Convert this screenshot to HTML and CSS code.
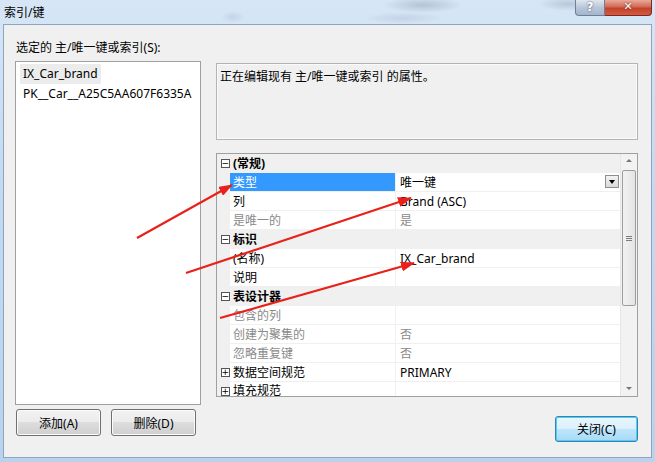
FILE: index.html
```html
<!DOCTYPE html>
<html lang="zh-CN">
<head>
<meta charset="UTF-8" />
<title>索引/键</title>
<link rel="stylesheet" href="styles.css">
</head>
<body>
	<!-- 对话框：外框 + 标题栏 + 客户区 -->
	<div class="window">
		<div class="titlebar">
			<span class="title">索引/键</span>
			<div class="caption-btns">
				<span class="cap-help">?</span>
				<span class="cap-close">&#x2715;</span>
			</div>
		</div>
		<div class="client">
			<div class="main">
				<div class="left">
					<div class="label">选定的 主/唯一键或索引(S):</div>
					<div class="listbox">
						<div class="item item-sel">IX_Car_brand</div>
						<div class="item">PK__Car__A25C5AA607F6335A</div>
					</div>
				</div>
				<div class="right">
					<div class="desc">正在编辑现有 主/唯一键或索引 的属性。</div>
					<div class="grid">
						<div class="rows">
							<div class="row cat"><span class="m"><i class="box">&minus;</i></span><span class="k">(常规)</span><span class="v"></span></div>
							<div class="row"><span class="m"></span><span class="k k-sel">类型</span><span class="v">唯一键<i class="drop"></i></span></div>
							<div class="row"><span class="m"></span><span class="k">列</span><span class="v">Brand (ASC)</span></div>
							<div class="row ro"><span class="m"></span><span class="k">是唯一的</span><span class="v">是</span></div>
							<div class="row cat"><span class="m"><i class="box">&minus;</i></span><span class="k">标识</span><span class="v"></span></div>
							<div class="row"><span class="m"></span><span class="k">(名称)</span><span class="v">IX_Car_brand</span></div>
							<div class="row"><span class="m"></span><span class="k">说明</span><span class="v"></span></div>
							<div class="row cat"><span class="m"><i class="box">&minus;</i></span><span class="k">表设计器</span><span class="v"></span></div>
							<div class="row ro"><span class="m"></span><span class="k">包含的列</span><span class="v"></span></div>
							<div class="row ro"><span class="m"></span><span class="k">创建为聚集的</span><span class="v">否</span></div>
							<div class="row ro"><span class="m"></span><span class="k">忽略重复键</span><span class="v">否</span></div>
							<div class="row"><span class="m"><i class="box">+</i></span><span class="k">数据空间规范</span><span class="v">PRIMARY</span></div>
							<div class="row row-last"><span class="m"><i class="box">+</i></span><span class="k">填充规范</span><span class="v"></span></div>
						</div>
						<div class="vscroll">
							<span class="arr arr-up"></span>
							<span class="thumb"><i class="grip"></i></span>
							<span class="track"></span>
							<span class="arr arr-down"></span>
						</div>
					</div>
				</div>
			</div>
			<div class="footer">
				<button class="btn">添加(A)</button>
				<button class="btn">删除(D)</button>
				<button class="btn btn-default">关闭(C)</button>
			</div>
		</div>
	</div>

	<!-- 截图上的红色标注箭头 -->
	<svg class="marks" width="655" height="462" viewBox="0 0 655 462">
		<defs>
			<marker id="head" markerWidth="14" markerHeight="10" refX="13" refY="5" orient="auto" markerUnits="userSpaceOnUse">
				<path d="M0,0 L14,5 L0,10 Z" fill="#e8211a" />
			</marker>
		</defs>
		<line x1="137" y1="238" x2="232" y2="185" stroke="#e8211a" stroke-width="2.2" marker-end="url(#head)" />
		<line x1="186" y1="273" x2="411" y2="198" stroke="#e8211a" stroke-width="2.2" marker-end="url(#head)" />
		<line x1="220" y1="318" x2="414" y2="263" stroke="#e8211a" stroke-width="2.2" marker-end="url(#head)" />
	</svg>
</body>
</html>
```

FILE: styles.css
```css
body {margin: 0; width: 655px; height: 462px; overflow: hidden; font: 12px "Noto Sans", "Noto Sans CJK SC", sans-serif; color: #000;}

/* 外框与标题栏 */
.window {position: relative; width: 655px; height: 462px; box-sizing: border-box; padding: 0 3px 4px 3px; display: flex; flex-direction: column;
	background: linear-gradient(180deg, #d6e6f6 0%, #c3daf1 40%, #b9d3ee 100%);}
.titlebar {height: 24px; display: flex; align-items: flex-start; position: relative;
	background:
		radial-gradient(ellipse 40px 8px at 420px 5px, rgba(120,130,150,.35), transparent),
		radial-gradient(ellipse 30px 7px at 565px 4px, rgba(120,130,150,.3), transparent),
		radial-gradient(ellipse 40px 6px at 400px 18px, rgba(150,160,180,.25), transparent),
		radial-gradient(ellipse 12px 6px at 230px 17px, rgba(150,160,180,.25), transparent);}
.title {margin: 5px 0 0 1px; line-height: 16px; font-size: 12px;}
.caption-btns {margin-left: auto; display: flex; height: 16px;}
.cap-help {width: 28px; height: 15px; border: 1px solid #6d7f98; border-top: 0; border-radius: 0 0 0 4px; color: #fff; font: bold 12px/14px "DejaVu Sans", sans-serif; text-align: center;
	background: linear-gradient(180deg, #dfe7f1 0%, #b8c6d8 50%, #a5b5cb 100%); text-shadow: 0 0 2px #34445c;}
.cap-close {width: 46px; height: 15px; border: 1px solid #7a2a21; border-top: 0; border-left: 0; border-radius: 0 0 4px 0; color: #fff; font: bold 11px/14px "DejaVu Sans", sans-serif; text-align: center;
	background: linear-gradient(180deg, #e9a99a 0%, #d26a55 45%, #c2422b 55%, #d45b3f 100%); text-shadow: 0 0 2px #5a1208;}

/* 客户区 */
.client {flex: 1; background: #f0f0f0; border: 1px solid #8fa4be; padding: 16px 13px 0 11px; display: flex; flex-direction: column;}
.main {display: flex; align-items: flex-start;}
.left {width: 186px;}
.label {line-height: 14px; padding-left: 1px;}
.listbox {margin-top: 6px; height: 338px; background: #fff; border: 1px solid #a0a0a0; padding: 2px 4px;}
.item {line-height: 20px; padding: 0 3px;}
.item-sel {display: inline-block; background: #ececec;}

.right {margin-left: 15px; width: 422px; padding-top: 22px;}
.desc {border: 1px solid #b4b4b4; box-shadow: inset 0 0 0 1px #fafafa; padding: 3px; box-sizing: border-box; height: 77px;}

/* 属性网格 */
.grid {margin-top: 13px; height: 244px; box-sizing: border-box; border: 1px solid #a0a0a0; background: #fff; display: flex; overflow: hidden;}
.rows {flex: 1; overflow: hidden;}
.row {display: flex; height: 19px; line-height: 19px;}
.row-last {line-height: 17px;}
.m {width: 13px; background: #f0f0f0; flex: none; display: flex; align-items: center; justify-content: center;}
.k {width: 166px; flex: none; padding-left: 3px; border-bottom: 1px solid #f0f0f0; border-right: 1px solid #f0f0f0; box-sizing: border-box; white-space: nowrap;}
.v {flex: 1; padding-left: 4px; border-bottom: 1px solid #f0f0f0; box-sizing: border-box; position: relative;}
.cat {background: #f0f0f0;}
.cat .k {font-weight: bold; border-color: #f0f0f0;}
.cat .v {border-color: #f0f0f0;}
.ro {color: #8a8a8a;}
.k-sel {background: #3399ff; color: #fff;}
.box {width: 7px; height: 7px; border: 1px solid #555; background: #fff; font: 9px/7px "DejaVu Sans", sans-serif; font-style: normal; text-align: center; color: #000; margin-left: 3px;}
.drop {position: absolute; right: 1px; top: 2px; width: 14px; height: 13px; border: 1px solid #8e8e8e; box-sizing: border-box;
	background: linear-gradient(180deg, #f4f4f4, #d9d9d9);}
.drop::after {content: ""; position: absolute; left: 3px; top: 4px; border: 3px solid transparent; border-top: 4px solid #000; border-bottom: 0;}

.vscroll {width: 16px; flex: none; background: #f2f2f2; border-left: 1px solid #e6e6e6; display: flex; flex-direction: column;}
.arr {height: 16px; position: relative; flex: none;}
.arr::after {content: ""; position: absolute; left: 5px; border: 3px solid transparent;}
.arr-up::after {top: 5px; border-bottom: 3px solid #777; border-top: 0;}
.arr-down::after {top: 7px; border-top: 3px solid #777; border-bottom: 0;}
.thumb {height: 136px; flex: none; margin: 0 1px; border: 1px solid #9c9c9c; border-radius: 2px; box-sizing: border-box;
	background: linear-gradient(90deg, #f2f2f2, #e4e4e4); display: flex; align-items: center; justify-content: center;}
.grip {width: 6px; height: 5px; background: repeating-linear-gradient(180deg, #7d7d7d 0 1px, transparent 1px 2px);}
.track {flex: 1;}

/* 底部按钮 */
.footer {display: flex; align-items: flex-start; margin-top: 4px;}
.btn {font: 12px "Noto Sans", "Noto Sans CJK SC", sans-serif; color: #000; height: 27px; width: 85px; padding: 0; border: 1px solid #707070; border-radius: 3px;
	background: linear-gradient(180deg, #f2f2f2 0%, #ebebeb 49%, #dddddd 50%, #cfcfcf 100%); box-shadow: inset 0 0 0 1px #fbfbfb;}
.btn:first-child {margin-left: 1px;}
.btn + .btn {margin-left: 10px;}
.btn-default {margin-left: auto !important; margin-top: 7px; width: 83px; height: 26px; border-color: #3c7fb1;
	background: linear-gradient(180deg, #eaf6fd 0%, #d9f0fc 49%, #bee6fd 50%, #a7d9f5 100%); box-shadow: inset 0 0 0 1px #48d0f8;}

.marks {position: absolute; left: 0; top: 0; pointer-events: none;}
```
